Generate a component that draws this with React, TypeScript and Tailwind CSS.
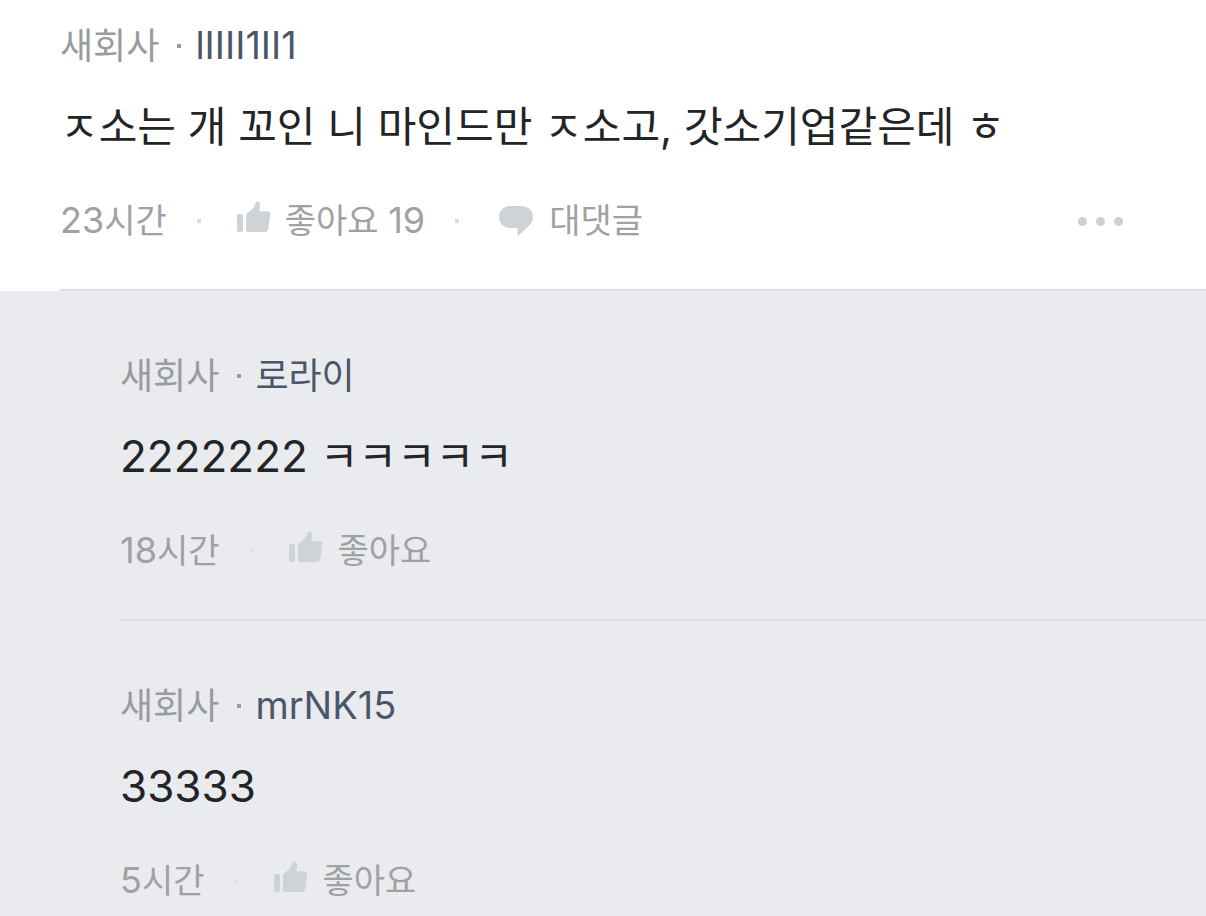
type Comment = {
  company: string;
  author: string;
  body: string;
  time: string;
  likes?: number;
};

const comment: Comment = {
  company: "새회사",
  author: "lIIII1II1",
  body: "ㅈ소는 개 꼬인 니 마인드만 ㅈ소고, 갓소기업같은데 ㅎ",
  time: "23시간",
  likes: 19,
};

const replies: Comment[] = [
  { company: "새회사", author: "로라이", body: "2222222 ㅋㅋㅋㅋㅋ", time: "18시간" },
  { company: "새회사", author: "mrNK15", body: "33333", time: "5시간" },
];

// Latin letters and digits are set slightly larger than the Hangul around them
function Mixed({ text, latin }: { text: string; latin: string }) {
  return text.split(/([A-Za-z0-9]+)/).map((part, i) =>
    i % 2 ? <span key={i} className={latin}>{part}</span> : part
  );
}

function ThumbIcon() {
  return (
    <svg className="mb-2" width="34" height="32" viewBox="0 0 34 32" fill="#cfd3d6" aria-hidden="true">
      <path d="M2 13h2q2 0 2 2v14q0 2-2 2H2q-2 0-2-2V15q0-2 2-2z" />
      <path d="M9 15.500C9 13.500 9.700 12.800 11 11.700L15.500 7.800C17 6.400 17.700 4.500 18.200 2.800C18.700 1.200 19.600.5 20.700.5C22.400.5 23.300 2 23 4.500L22.300 10.300H30.500C32.500 10.300 33.400 11.600 33.100 13.700L31.300 27.500C30.900 30 29.800 31 27.500 31H11.500C9.800 31 9 30.200 9 28.500Z" />
    </svg>
  );
}

function BubbleIcon() {
  return (
    <svg width="34" height="32" viewBox="0 0 34 32" fill="#cfd3d6" aria-hidden="true">
      <path d="M12 1H22C29 1 34 5.300 34 12C34 16 32 19 28.500 22L18.500 31.500V23H12C5 23 0 18.500 0 12S5 1 12 1Z" />
    </svg>
  );
}

function CommentContent({ item, reply = false }: { item: Comment; reply?: boolean }) {
  const dot = reply ? "size-1 bg-[#dfe1e5]" : "size-1 bg-[#dcdee0]";

  return (
    <>
      <header className="flex items-center text-[36px] leading-12">
        <span className="text-[#999b9e]">{item.company}</span>
        <span className="mr-3.5 ml-[18px] size-1 bg-[#999b9e]" />
        <span className="text-[#4b5768]">
          <Mixed text={item.author} latin="text-[38px] leading-none" />
        </span>
      </header>
      <p className="mt-[27px] text-[42px] leading-15 text-[#222425]">
        <Mixed text={item.body} latin="text-[44px] leading-none" />
      </p>
      <footer className="mt-10 flex items-center text-[34px] leading-12 text-[#a0a1a2]">
        <time className="mr-[30px]">
          <Mixed text={item.time} latin="text-[36px] leading-none" />
        </time>
        <span className={dot} />
        <button className="ml-9 flex items-center gap-3.5">
          <ThumbIcon />
          <span>
            <Mixed text={item.likes ? `좋아요 ${item.likes}` : "좋아요"} latin="text-[36px] leading-none" />
          </span>
        </button>
        {!reply && (
          <>
            <span className="ml-[30px] size-1 bg-[#dcdee0]" />
            <button className="ml-10 flex items-center gap-4">
              <BubbleIcon />
              <span>대댓글</span>
            </button>
            <button className="mr-[83px] ml-auto flex gap-[9px]" aria-label="더보기">
              <span className="size-[9px] rounded-full bg-[#cfcfcf]" />
              <span className="size-[9px] rounded-full bg-[#cfcfcf]" />
              <span className="size-[9px] rounded-full bg-[#cfcfcf]" />
            </button>
          </>
        )}
      </footer>
    </>
  );
}

export default function App() {
  return (
    <main className="min-h-screen bg-[#e9ebef] font-['Inter','Noto_Sans_CJK_KR',sans-serif]">
      <article className="bg-white pl-15">
        <div className="border-b-2 border-[#dddfe3] pt-[22px] pb-11">
          <CommentContent item={comment} />
        </div>
      </article>
      <section className="pl-30">
        {replies.map((item) => (
          <article key={item.author} className="border-b-2 border-[#dddfe3] pt-[61px] pb-11 last:border-b-0 last:pb-2">
            <CommentContent item={item} reply />
          </article>
        ))}
      </section>
    </main>
  );
}
